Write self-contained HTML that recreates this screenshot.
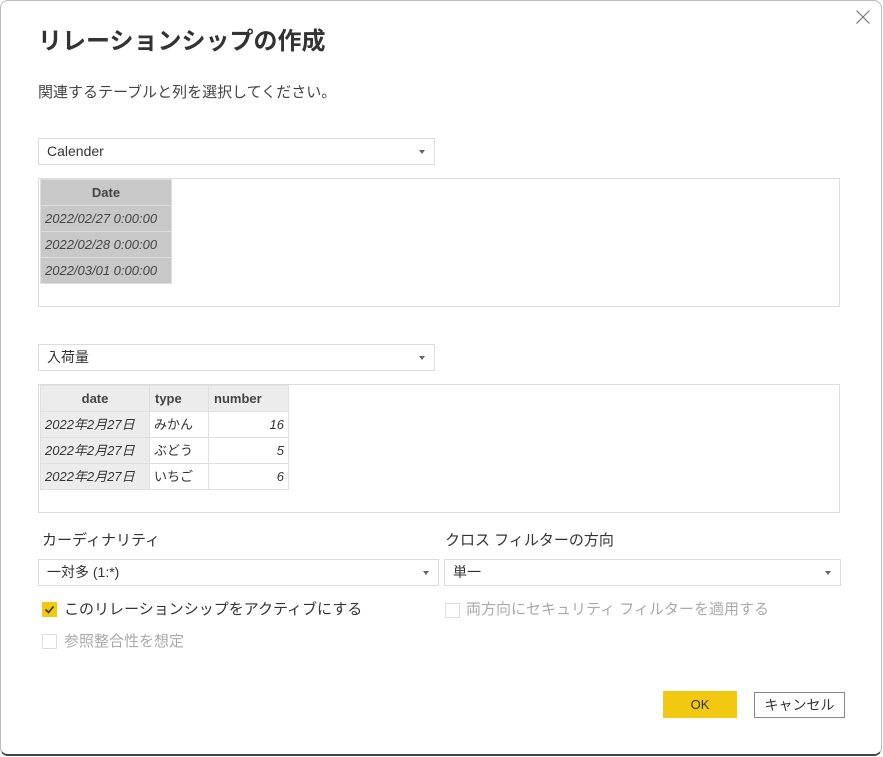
<!DOCTYPE html><html><head><meta charset="utf-8"><style>
*{box-sizing:border-box;margin:0;padding:0}
body{width:883px;height:757px;background:#fff;font-family:"Liberation Sans","Noto Sans CJK JP",sans-serif;color:#333;position:relative;overflow:hidden}
.dlg{position:absolute;left:0;top:0;width:882px;height:756px;border:1px solid #bbb;border-bottom:2px solid #444;border-radius:8px}
.a{position:absolute}
.dd{position:absolute;border:1px solid #ddd;height:27px;font-size:14px;line-height:25px;padding:0 8px;color:#333}
.dd:after{content:"";position:absolute;right:9px;top:11px;border-left:3.5px solid transparent;border-right:3.5px solid transparent;border-top:4px solid #666}
.box{position:absolute;border:1px solid #ddd}
table{border-collapse:collapse;position:absolute;left:1px;top:0;font-size:13px}
td{border:1px solid #e0e0e0;height:26px;line-height:16px;padding:0 4px;white-space:nowrap}
.t1 td{background:#c8c8c8;border-color:#ddd;font-style:italic;color:#444}
.t1 tr:first-child td{font-style:normal;font-weight:bold;text-align:center}
.t2 th{background:#ececec;border:1px solid #e0e0e0;font-weight:bold;height:26px;text-align:left;padding:0 5px;color:#444}
.t2 .d{background:#ececec;font-style:italic}
.cb{position:absolute;width:15px;height:15px;border:1px solid #ddd;background:#fff}
.lbl{position:absolute;font-size:15px;line-height:20px}
</style></head><body><div class="dlg"></div>
<svg class="a" style="left:855px;top:9px" width="16" height="16"><path d="M1.5 1.5l13 13M14.5 1.5l-13 13" stroke="#777" stroke-width="1.2"/></svg>
<div class="a" style="left:38px;top:26px;font-size:24px;line-height:32px;font-weight:bold;color:#333">リレーションシップの作成</div>
<div class="a" style="left:38px;top:83px;font-size:15px;line-height:20px;color:#444">関連するテーブルと列を選択してください。</div>
<div class="dd" style="left:38px;top:138px;width:397px">Calender</div>
<div class="box" style="left:38px;top:178px;width:802px;height:129px">
<table class="t1"><tr><td style="width:131px">Date</td></tr><tr><td>2022/02/27 0:00:00</td></tr><tr><td>2022/02/28 0:00:00</td></tr><tr><td>2022/03/01 0:00:00</td></tr></table></div>
<div class="dd" style="left:38px;top:344px;width:397px">入荷量</div>
<div class="box" style="left:38px;top:384px;width:802px;height:129px">
<table class="t2"><tr><th style="width:109px;text-align:center">date</th><th style="width:59px">type</th><th style="width:80px">number</th></tr>
<tr><td class="d">2022年2月27日</td><td>みかん</td><td style="text-align:right;font-style:italic">16</td></tr>
<tr><td class="d">2022年2月27日</td><td>ぶどう</td><td style="text-align:right;font-style:italic">5</td></tr>
<tr><td class="d">2022年2月27日</td><td>いちご</td><td style="text-align:right;font-style:italic">6</td></tr></table></div>
<div class="lbl" style="left:42px;top:531px">カーディナリティ</div>
<div class="lbl" style="left:445px;top:531px">クロス フィルターの方向</div>
<div class="dd" style="left:38px;top:559px;width:401px">一対多 (1:*)</div>
<div class="dd" style="left:444px;top:559px;width:397px">単一</div>
<div class="cb" style="left:42px;top:602px;background:#f2c811;border-color:#f2c811"><svg width="15" height="15" style="position:absolute;left:-1px;top:-1px"><path d="M3.5 7.5l3 3 5-6" stroke="#333" stroke-width="1.6" fill="none"/></svg></div>
<div class="lbl" style="left:64px;top:600px">このリレーションシップをアクティブにする</div>
<div class="cb" style="left:445px;top:603px"></div>
<div class="lbl" style="left:466px;top:600px;color:#aaa">両方向にセキュリティ フィルターを適用する</div>
<div class="cb" style="left:42px;top:634px"></div>
<div class="lbl" style="left:64px;top:632px;color:#aaa">参照整合性を想定</div>
<div class="a" style="left:663px;top:691px;width:74px;height:27px;background:#f2c811;font-size:13px;text-align:center;line-height:27px">OK</div>
<div class="a" style="left:754px;top:692px;width:91px;height:26px;border:1px solid #888;font-size:14px;text-align:center;line-height:24px">キャンセル</div>
</body></html>
